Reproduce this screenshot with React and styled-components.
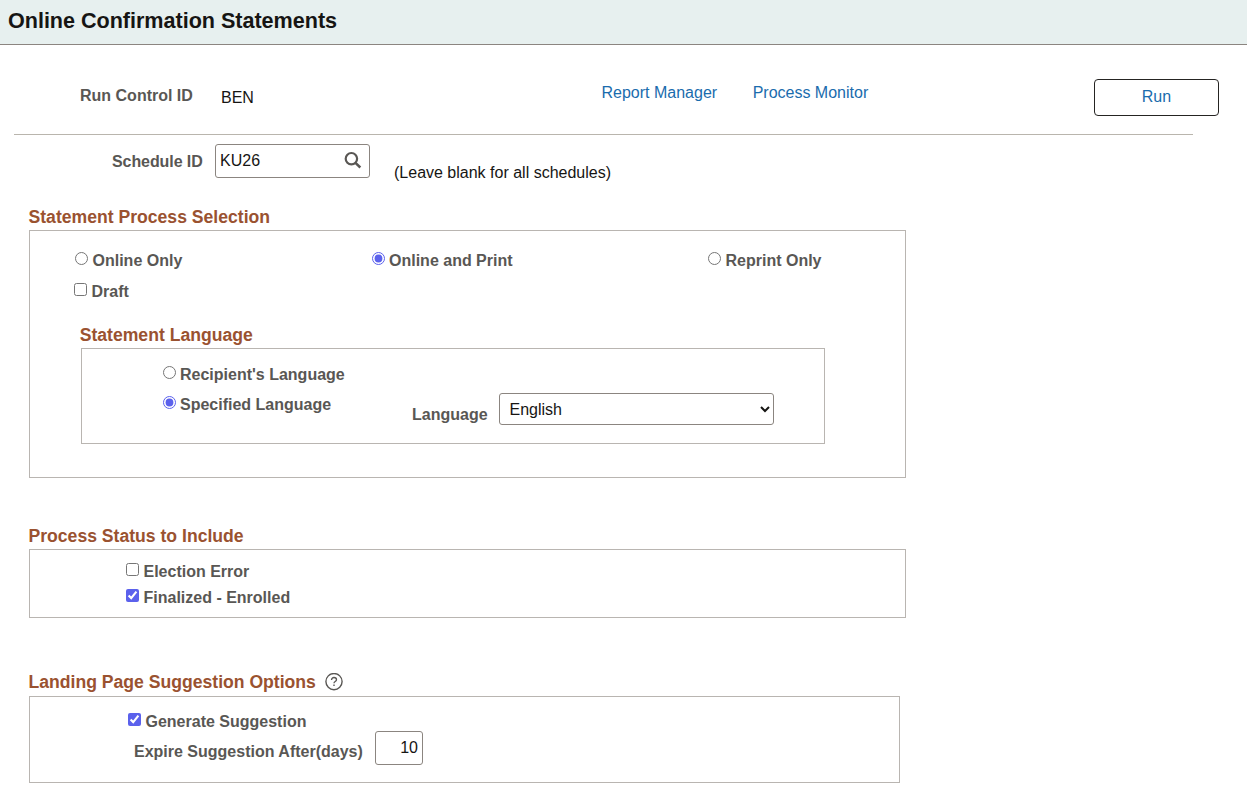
import React, { useState } from "react";
import styled, { createGlobalStyle } from "styled-components";

const GlobalStyle = createGlobalStyle`
  * {
    box-sizing: border-box;
  }
  body {
    margin: 0;
    background: #fff;
    color: #161513;
    font-family: "Liberation Sans", Arial, sans-serif;
    font-size: 16px;
    line-height: 18px;
  }
  input,
  select,
  button {
    font: inherit;
    margin: 0;
  }
`;

const PageHeader = styled.header`
  height: 45px;
  padding: 8px 8px 0;
  background: #e7f0ef;
  border-bottom: 1px solid #8b8580;
  h1 {
    margin: 0;
    font-size: 21.6px;
    line-height: 25px;
    letter-spacing: -0.03px;
  }
`;

const RunBar = styled.div`
  display: flex;
  align-items: flex-start;
  width: 1205px;
  height: 89px;
  margin-left: 14px;
  padding: 34px 0 0 66px;
`;

const Divider = styled.hr`
  width: 1179px;
  height: 1px;
  margin: 0 0 0 14px;
  border: 0;
  background: #b9b5ad;
`;

const Label = styled.label`
  color: #595754;
  font-weight: bold;
  white-space: nowrap;
`;

const RunLabel = styled(Label)`
  width: 141px;
  margin-top: 8px;
`;

const RunValue = styled.span`
  width: 380.5px;
  margin-top: 10px;
`;

const Links = styled.nav`
  display: flex;
  gap: 35.5px;
  margin-top: 5px;
  a {
    color: #1a6cad;
    text-decoration: none;
  }
`;

const RunButton = styled.button`
  width: 125px;
  height: 37px;
  margin-left: auto;
  padding: 0 0 2px;
  color: #1a6cad;
  background: #fff;
  border: 1px solid #252422;
  border-radius: 4px;
`;

const ScheduleRow = styled.div`
  display: flex;
  align-items: flex-start;
  height: 72px;
  padding: 9px 0 0 112px;
`;

const ScheduleLabel = styled(Label)`
  width: 103px;
  margin-top: 9px;
  letter-spacing: -0.08px;
`;

const Lookup = styled.div`
  display: flex;
  align-items: center;
  width: 155px;
  height: 34px;
  padding: 0 7px 0 4px;
  border: 1px solid #8b8580;
  border-radius: 3px;
  input {
    flex: 1;
    min-width: 0;
    padding: 0;
    border: 0;
    outline: 0;
    color: #161513;
  }
  svg {
    display: block;
    margin-bottom: 2px;
  }
`;

const Hint = styled.span`
  margin: 20px 0 0 24px;
`;

const Section = styled.section`
  width: ${(props) => props.$width || 877}px;
  margin: 0 0 ${(props) => props.$after || 0}px 29px;
`;

const SectionTitle = styled.h2`
  display: flex;
  align-items: center;
  gap: 9px;
  height: 20px;
  margin: 0 0 ${(props) => props.$gap || 3}px -0.5px;
  color: #9a5230;
  font-size: 17.6px;
  line-height: 20px;
  white-space: nowrap;
`;

const GroupBox = styled.div`
  height: ${(props) => props.$height}px;
  padding: ${(props) => props.$padding};
  border: 1px solid #b9b5b1;
`;

const Choice = styled.label`
  display: flex;
  align-items: flex-start;
  gap: ${(props) => props.$gap || 4.5}px;
  height: 18px;
  color: #595754;
  font-weight: bold;
  white-space: nowrap;
  input {
    flex: none;
    width: 13px;
    height: 13px;
    accent-color: #5b61ec;
  }
`;

const ProcessTypes = styled.div`
  display: grid;
  grid-template-columns: 296.5px 336.5px auto;
  padding-left: 1px;
`;

const DraftRow = styled.div`
  margin-top: 13px;
`;

const LanguageSection = styled.section`
  width: 744px;
  margin: 24px 0 0 7px;
  ${SectionTitle} {
    margin-left: -1.3px;
  }
`;

const LanguageGrid = styled.div`
  display: grid;
  grid-template-columns: 249px 87px 275px;
`;

const LanguageModes = styled.div`
  display: flex;
  flex-direction: column;
  gap: 12px;
`;

const LanguageLabel = styled(Label)`
  margin-top: 40px;
`;

const LanguageSelect = styled.select`
  height: 32px;
  margin-top: 27px;
  padding: 0 1px 0 5.5px;
  color: #161513;
  background: #fff;
  border: 1px solid #8b8580;
  border-radius: 3px;
`;

const StatusList = styled.div`
  display: flex;
  flex-direction: column;
  gap: 8px;
`;

const ExpireRow = styled.div`
  display: flex;
  align-items: flex-start;
  margin-left: 6px;
`;

const ExpireLabel = styled(Label)`
  width: 241px;
  margin-top: 12px;
`;

const DaysInput = styled.input`
  width: 48px;
  height: 34px;
  padding: 0 4px 1px;
  color: #161513;
  text-align: right;
  border: 1px solid #8b8580;
  border-radius: 3px;
`;

const SearchIcon = () => (
  <svg width="18" height="18" viewBox="0 0 18 18" fill="none" stroke="#595754">
    <circle cx="7.4" cy="7.7" r="5.7" strokeWidth="2.2" />
    <path d="M11.5 11.9L16.3 16.5" strokeWidth="2.5" />
  </svg>
);

const HelpIcon = () => (
  <svg width="18" height="18" viewBox="0 0 18 18" fill="none" stroke="#595754">
    <circle cx="9" cy="8.6" r="8.1" strokeWidth="1.4" />
    <path
      d="M6.5 6.9C6.5 5.4 7.6 4.5 9 4.5s2.5.9 2.5 2.2c0 1.8-2.5 1.8-2.5 3.5"
      strokeWidth="1.3"
    />
    <path d="M9 11.4v1.5" strokeWidth="1.4" />
  </svg>
);

const Option = ({ type = "checkbox", label, gap, ...rest }) => (
  <Choice $gap={gap}>
    <input type={type} {...rest} />
    <span>{label}</span>
  </Choice>
);

const processTypes = ["Online Only", "Online and Print", "Reprint Only"];
const languageModes = ["Recipient's Language", "Specified Language"];

const App = () => {
  const [processType, setProcessType] = useState("Online and Print");
  const [languageMode, setLanguageMode] = useState("Specified Language");

  return (
    <>
      <GlobalStyle />
      <PageHeader>
        <h1>Online Confirmation Statements</h1>
      </PageHeader>
      <RunBar>
        <RunLabel as="span">Run Control ID</RunLabel>
        <RunValue>BEN</RunValue>
        <Links>
          <a href="#report-manager">Report Manager</a>
          <a href="#process-monitor">Process Monitor</a>
        </Links>
        <RunButton>Run</RunButton>
      </RunBar>
      <Divider />
      <ScheduleRow>
        <ScheduleLabel htmlFor="schedule">Schedule ID</ScheduleLabel>
        <Lookup>
          <input id="schedule" defaultValue="KU26" />
          <SearchIcon />
        </Lookup>
        <Hint>(Leave blank for all schedules)</Hint>
      </ScheduleRow>

      <Section $after={48}>
        <SectionTitle>Statement Process Selection</SectionTitle>
        <GroupBox $height={248} $padding="21px 0 0 44px">
          <ProcessTypes>
            {processTypes.map((type) => (
              <Option
                key={type}
                type="radio"
                name="processType"
                label={type}
                checked={processType === type}
                onChange={() => setProcessType(type)}
              />
            ))}
          </ProcessTypes>
          <DraftRow>
            <Option label="Draft" />
          </DraftRow>
          <LanguageSection>
            <SectionTitle>Statement Language</SectionTitle>
            <GroupBox $height={96} $padding="17px 0 0 81px">
              <LanguageGrid>
                <LanguageModes>
                  {languageModes.map((mode) => (
                    <Option
                      key={mode}
                      type="radio"
                      name="languageMode"
                      label={mode}
                      gap={4}
                      checked={languageMode === mode}
                      onChange={() => setLanguageMode(mode)}
                    />
                  ))}
                </LanguageModes>
                <LanguageLabel htmlFor="language">Language</LanguageLabel>
                <LanguageSelect id="language">
                  <option>English</option>
                </LanguageSelect>
              </LanguageGrid>
            </GroupBox>
          </LanguageSection>
        </GroupBox>
      </Section>

      <Section $after={54}>
        <SectionTitle>Process Status to Include</SectionTitle>
        <GroupBox $height={69} $padding="13px 0 0 96px">
          <StatusList>
            <Option label="Election Error" />
            <Option label="Finalized - Enrolled" defaultChecked />
          </StatusList>
        </GroupBox>
      </Section>

      <Section $width={871}>
        <SectionTitle $gap={4}>
          Landing Page Suggestion Options
          <HelpIcon />
        </SectionTitle>
        <GroupBox $height={87} $padding="16px 0 0 98px">
          <Option label="Generate Suggestion" defaultChecked />
          <ExpireRow>
            <ExpireLabel htmlFor="days">Expire Suggestion After(days)</ExpireLabel>
            <DaysInput id="days" defaultValue="10" />
          </ExpireRow>
        </GroupBox>
      </Section>
    </>
  );
};

export default App;
